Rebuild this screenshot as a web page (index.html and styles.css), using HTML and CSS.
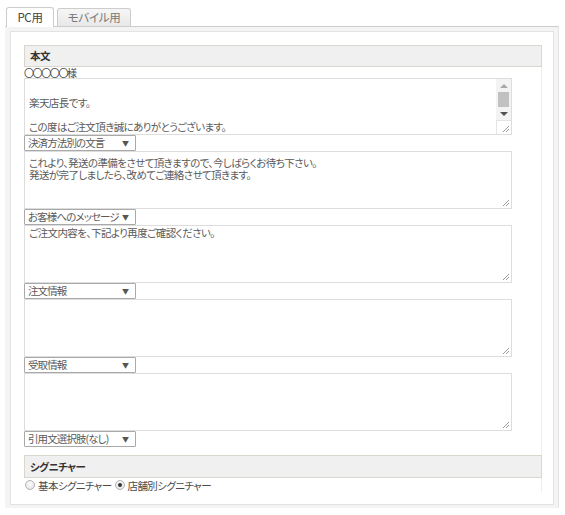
FILE: index.html
```html
<!DOCTYPE html>
<html lang="ja">
<head>
<meta charset="utf-8">
<link rel="stylesheet" href="styles.css">
</head>
<body>
<div class="page">
  <div class="tabs">
    <div class="tab active">PC用</div>
    <div class="tab">モバイル用</div>
  </div>
  <div class="panel">
    <div class="box">
      <div class="content">
        <div class="section-head">本文</div>
        <div class="name-line">〇〇〇〇〇様</div>
        <div class="ta ta-first">
          <div class="ta-text"><div class="ln"></div><div class="ln">楽天店長です。</div><div class="ln"></div><div class="ln">この度はご注文頂き誠にありがとうございます。</div></div>
          <div class="scrollbar">
            <span class="sb-up"></span>
            <span class="sb-thumb"></span>
            <span class="sb-down"></span>
            <span class="sb-corner"></span>
          </div>
          <svg class="grip" width="8" height="8" viewBox="0 0 8 8"><path d="M7 1 L1 7 M7 4 L4 7" stroke="#9a9a9a" stroke-width="1"/></svg>
        </div>
        <div class="sel">決済方法別の文言<span class="arrow">▼</span></div>
        <div class="ta ta-second">
          <div class="ta-text"><div class="ln">これより、発送の準備をさせて頂きますので、今しばらくお待ち下さい。</div><div class="ln">発送が完了しましたら、改めてご連絡させて頂きます。</div></div>
          <svg class="grip" width="8" height="8" viewBox="0 0 8 8"><path d="M7 1 L1 7 M7 4 L4 7" stroke="#9a9a9a" stroke-width="1"/></svg>
        </div>
        <div class="sel">お客様へのメッセージ<span class="arrow">▼</span></div>
        <div class="ta">
          <div class="ta-text"><div class="ln">ご注文内容を、下記より再度ご確認ください。</div></div>
          <svg class="grip" width="8" height="8" viewBox="0 0 8 8"><path d="M7 1 L1 7 M7 4 L4 7" stroke="#9a9a9a" stroke-width="1"/></svg>
        </div>
        <div class="sel">注文情報<span class="arrow">▼</span></div>
        <div class="ta">
          <div class="ta-text"></div>
          <svg class="grip" width="8" height="8" viewBox="0 0 8 8"><path d="M7 1 L1 7 M7 4 L4 7" stroke="#9a9a9a" stroke-width="1"/></svg>
        </div>
        <div class="sel">受取情報<span class="arrow">▼</span></div>
        <div class="ta">
          <div class="ta-text"></div>
          <svg class="grip" width="8" height="8" viewBox="0 0 8 8"><path d="M7 1 L1 7 M7 4 L4 7" stroke="#9a9a9a" stroke-width="1"/></svg>
        </div>
        <div class="sel">引用文選択肢(なし)<span class="arrow">▼</span></div>
        <div class="section-head sig-head">シグニチャー</div>
        <div class="radios">
          <span class="radio"></span><span class="radio-label">基本シグニチャー</span>
          <span class="radio checked"></span><span class="radio-label">店舗別シグニチャー</span>
        </div>
      </div>
    </div>
  </div>
</div>
</body>
</html>
```

FILE: styles.css
```css
html, body {
  margin: 0;
  padding: 0;
  background: #ffffff;
}
body {
  font-family: "Noto Sans CJK JP", "Liberation Sans", sans-serif;
  font-size: 10.5px;
  letter-spacing: -0.6px;
  color: #333333;
  font-feature-settings: "palt";
}
.page {
  padding: 7px 0 0 5px;
  width: 554px;
}
.tabs {
  display: flex;
  align-items: flex-end;
  gap: 3px;
  height: 19px;
  padding-left: 1px;
}
.tab {
  box-sizing: border-box;
  height: 18px;
  width: 74px;
  border: 1px solid #cccccc;
  border-bottom: none;
  border-radius: 3px 3px 0 0;
  background: linear-gradient(#f6f6f6, #e8e8e8);
  color: #777777;
  font-size: 11.5px;
  letter-spacing: -0.3px;
  line-height: 17px;
  text-align: center;
}
.tab.active {
  position: relative;
  z-index: 1;
  width: 48px;
  height: 20px;
  margin-bottom: -1px;
  background: #ffffff;
  color: #444444;
  line-height: 19px;
}
.panel {
  border-top: 1px solid #cccccc;
  border-right: 1px solid #e4e4e4;
  background: #f4f4f4;
  padding: 4px 4px 3px 5px;
}
.box {
  background: #ffffff;
  border: 1px solid #e3e3e3;
  padding: 13px 11px 12px 13px;
}
.content {
  width: 517px;
  border-right: 1px solid #eeeeee;
}
.section-head {
  box-sizing: border-box;
  width: 518px;
  height: 22px;
  border: 1px solid #d9d6cd;
  background: #f0f0f0;
  font-weight: bold;
  line-height: 20px;
  padding-left: 5px;
  color: #333333;
  font-size: 10.5px;
}
.name-line {
  height: 11px;
  line-height: 11px;
  font-size: 10px;
  letter-spacing: -1.4px;
  color: #444444;
}
.ta {
  position: relative;
  box-sizing: border-box;
  width: 488px;
  height: 58px;
  border: 1px solid #dddddd;
  background: #ffffff;
}
.ta-first {
  height: 57px;
}
.ta-text {
  padding: 1px 4px 0 4px;
  color: #5a5a5a;
  white-space: nowrap;
}
.ln {
  height: 12px;
  line-height: 12px;
}
.ta-first .ta-text {
  padding-top: 6px;
}
.ta-second .ta-text {
  padding-top: 5px;
}
.grip {
  position: absolute;
  right: 1px;
  bottom: 1px;
}
.scrollbar {
  position: absolute;
  top: 0;
  right: 0;
  bottom: 0;
  width: 15px;
  background: #f3f3f3;
  display: flex;
  flex-direction: column;
  align-items: center;
}
.sb-up {
  width: 0;
  height: 0;
  margin-top: 5px;
  border-left: 4px solid transparent;
  border-right: 4px solid transparent;
  border-bottom: 4px solid #a8a8a8;
}
.sb-thumb {
  width: 11px;
  height: 15px;
  margin-top: 4px;
  background: #c1c1c1;
}
.sb-down {
  width: 0;
  height: 0;
  margin-top: 5px;
  border-left: 4px solid transparent;
  border-right: 4px solid transparent;
  border-top: 4px solid #505050;
}
.sb-corner {
  box-sizing: border-box;
  width: 15px;
  height: 14px;
  margin-top: auto;
  background: #ffffff;
  border-left: 1px solid #e4e4e4;
  border-top: 1px solid #e4e4e4;
}
.sel {
  position: relative;
  box-sizing: border-box;
  width: 112px;
  height: 16px;
  border: 1px solid #a9a9a9;
  border-radius: 1px;
  background: #ffffff;
  line-height: 14px;
  padding-left: 3px;
  color: #5a5a5a;
  letter-spacing: -0.9px;
  white-space: nowrap;
}
.arrow {
  position: absolute;
  right: 6px;
  top: 0;
  font-size: 7px;
  letter-spacing: 0;
  line-height: 14px;
  color: #555555;
}
.sig-head {
  margin-top: 8px;
  height: 23px;
  line-height: 21px;
}
.radios {
  display: flex;
  align-items: center;
  height: 14px;
  color: #4a4a4a;
}
.radio {
  box-sizing: border-box;
  width: 10px;
  height: 10px;
  border-radius: 50%;
  border: 1px solid #b5b5b5;
  background: radial-gradient(circle at 50% 40%, #ffffff, #dcdcdc);
  margin: 0 3px 0 1px;
  display: flex;
  align-items: center;
  justify-content: center;
}
.radio.checked::after {
  content: "";
  width: 4px;
  height: 4px;
  border-radius: 50%;
  background: #333333;
}
.radio-label {
  margin-right: 2px;
}
```
